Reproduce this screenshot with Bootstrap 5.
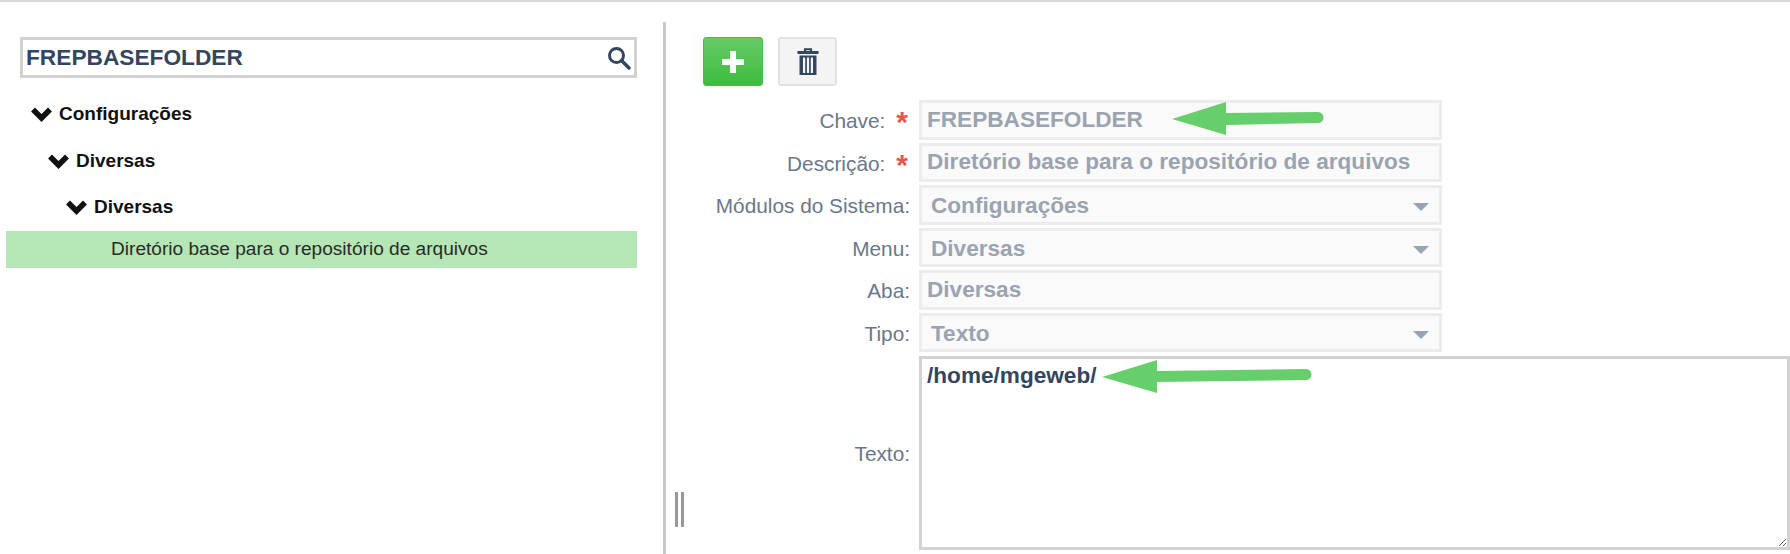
<!DOCTYPE html>
<html lang="pt-BR">
<head>
<meta charset="utf-8">
<title>Parâmetros</title>
<link rel="stylesheet" href="https://cdn.jsdelivr.net/npm/bootstrap@5.3.0/dist/css/bootstrap.min.css">
<style>
html,body{height:554px;overflow:hidden;background:#fff}
body{font-family:"Liberation Sans",Arial,sans-serif;border-top:2px solid #d9d9d9}
.shell{height:552px;position:relative}
.side{width:663px;flex:none;padding-top:35px}
.finder{margin-left:20px;width:617px;height:41px;border:3px solid #d2d2d2;color:#34455e;font-size:22.7px;font-weight:700;padding:0 3px}
.branch{height:46.5px;font-size:19px;font-weight:700;color:#111;gap:6px}
.lvl0{padding-left:30px}.lvl1{padding-left:47px}.lvl2{padding-left:65px}
.tree{margin-top:13px}
.picked{margin-left:6px;width:631px;height:37px;background:#b5e6b5;color:#2a2a2a;font-size:19.1px;padding-left:105px}
.rule{width:3px;flex:none;background:#c8c8c8;margin-top:20px}
.pane{flex:1 1 auto;min-width:0;padding-top:35px;position:relative}
.grip{position:absolute;left:9px;top:490px;width:9px;height:35px;border-left:3px solid #999;border-right:3px solid #999}
.tools{padding-left:37px;gap:15px;height:49px;margin-bottom:14px}
.act{width:60px;height:49px;padding:0;border-radius:3px;display:flex;align-items:center;justify-content:center}
.act-add{background:linear-gradient(#66cb66,#3ebc3e);border:1px solid #48bd48}
.act-del{width:59px;background:#f4f4f4;border:2px solid #e2e2e2}
.fields{gap:3px}
.lab{width:253px;flex:none;text-align:right;color:#6b7788;font-size:20.8px;padding-right:9px;padding-top:2px;margin:0;white-space:nowrap}
.req{color:#e4574a;font-size:30px;font-weight:700;line-height:18px;display:inline-block;margin-left:11px;margin-right:2px;height:18px;vertical-align:top;padding-top:8px}
.box{width:523px;height:39.5px;background:#fafafa;border:3px solid #ececec;border-radius:0;color:#9aa3b0;font-size:22.6px;font-weight:700;padding:0 5px;display:flex;align-items:center;box-shadow:none}
.box.form-select{padding:3px 0 0 9px;background-image:none;position:relative}
.caret{position:absolute;right:10px;top:15px;width:0;height:0;border-left:8px solid transparent;border-right:8px solid transparent;border-top:8px solid #9aa3b0}
.note{flex:1 1 auto;height:194px;border:3px solid #d2d2d2;border-radius:0;color:#34455e;font-size:22.6px;font-weight:700;padding:3px 5px;margin-top:1px;line-height:1.2;box-shadow:none}
.marks{position:absolute;left:0;top:-2px;pointer-events:none}
</style>
</head>
<body>
<div class="shell d-flex">
  <aside class="side">
    <div class="finder form-control rounded-0 d-flex align-items-center justify-content-between">
      <span>FREPBASEFOLDER</span>
      <svg width="24" height="24" viewBox="0 0 24 24"><circle cx="9.500" cy="9.500" r="7" fill="none" stroke="#34455e" stroke-width="3"/><line x1="14.500" y1="14.500" x2="22" y2="22" stroke="#34455e" stroke-width="3.500" stroke-linecap="round"/></svg>
    </div>
    <ul class="tree list-unstyled mb-0">
      <li class="branch lvl0 d-flex align-items-center"><svg width="23" height="16" viewBox="0 0 23 16"><polyline points="3,3.500 11.500,12 20,3.500" fill="none" stroke="#111" stroke-width="5.500"/></svg><span>Configurações</span></li>
      <li class="branch lvl1 d-flex align-items-center"><svg width="23" height="16" viewBox="0 0 23 16"><polyline points="3,3.500 11.500,12 20,3.500" fill="none" stroke="#111" stroke-width="5.500"/></svg><span>Diversas</span></li>
      <li class="branch lvl2 d-flex align-items-center"><svg width="23" height="16" viewBox="0 0 23 16"><polyline points="3,3.500 11.500,12 20,3.500" fill="none" stroke="#111" stroke-width="5.500"/></svg><span>Diversas</span></li>
      <li class="picked d-flex align-items-center">Diretório base para o repositório de arquivos</li>
    </ul>
  </aside>
  <div class="rule"></div>
  <main class="pane">
    <div class="grip"></div>
    <div class="tools d-flex">
      <button type="button" class="btn act act-add" aria-label="Adicionar"><svg width="22" height="22" viewBox="0 0 22 22"><path d="M8 0h6v8h8v6h-8v8H8v-8H0V8h8z" fill="#fff"/></svg></button>
      <button type="button" class="btn act act-del" aria-label="Excluir"><svg width="22" height="28" viewBox="0 0 22 28"><path d="M8 3V1.200h6V3" fill="none" stroke="#34455e" stroke-width="2"/><rect x="0.500" y="3" width="21" height="3" fill="#34455e"/><path d="M2.500 7.500h17V27h-17z" fill="#34455e"/><path d="M6 9.500h2.200V25H6zM9.900 9.500h2.200V25H9.900zM13.800 9.500H16V25h-2.200z" fill="#f4f4f4"/></svg></button>
    </div>
    <div class="fields d-flex flex-column">
      <div class="d-flex align-items-center"><label class="lab">Chave:<span class="req">*</span></label><div class="box form-control">FREPBASEFOLDER</div></div>
      <div class="d-flex align-items-center"><label class="lab">Descrição:<span class="req">*</span></label><div class="box form-control">Diretório base para o repositório de arquivos</div></div>
      <div class="d-flex align-items-center"><label class="lab">Módulos do Sistema:</label><div class="box form-select">Configurações<i class="caret"></i></div></div>
      <div class="d-flex align-items-center"><label class="lab">Menu:</label><div class="box form-select">Diversas<i class="caret"></i></div></div>
      <div class="d-flex align-items-center"><label class="lab">Aba:</label><div class="box form-control">Diversas</div></div>
      <div class="d-flex align-items-center"><label class="lab">Tipo:</label><div class="box form-select">Texto<i class="caret"></i></div></div>
      <div class="d-flex align-items-center"><label class="lab">Texto:</label><textarea class="note form-control" readonly>/home/mgeweb/</textarea></div>
    </div>
  </main>
  <svg class="marks" width="1790" height="554" viewBox="0 0 1790 554">
    <path d="M1172 119 1226 102V113L1318 112A5.500 5.500 0 0 1 1318 123L1226 125V135Z" fill="#66cf6b"/>
    <path d="M1102 377 1157 360V371L1306 369A5.500 5.500 0 0 1 1306 380L1157 382V393Z" fill="#66cf6b"/>
  </svg>
</div>
<script src="https://cdn.jsdelivr.net/npm/bootstrap@5.3.0/dist/js/bootstrap.bundle.min.js"></script>
</body>
</html>
